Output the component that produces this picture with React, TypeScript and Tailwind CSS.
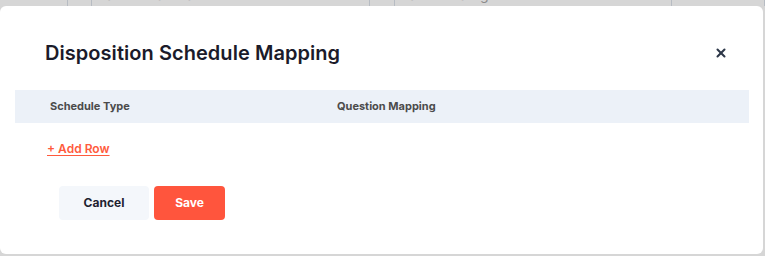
import { X } from 'lucide-react';

const BackgroundRow = () => {
  // just the bottom edge of the table row behind the overlay
  const cells = [
    { w: 'w-[68px]', text: '' },
    { w: 'w-[24px]', text: '' },
    { w: 'w-[278px]', text: 'Search Sub Sub Process' },
    { w: 'w-[25px]', text: '' },
    { w: 'w-[277px]', text: 'Search Stage' },
    { w: 'flex-1', text: '' },
  ];
  return (
    <div className="h-[6px] overflow-hidden">
      <div className="flex h-[28px] -mt-[20px]">
        {cells.map((c, i) => (
          <div
            key={i}
            className={`${c.w} h-full border-r border-[#b7bcc3] pl-[13px] flex items-center text-[14px] text-[#8c8c8c]`}
          >
            {c.text}
          </div>
        ))}
      </div>
    </div>
  );
};

const App = () => {
  return (
    <div
      className="w-[765px] h-[256px] overflow-hidden bg-[#d6d6d6]"
      style={{ fontFamily: 'Inter, "Noto Sans", sans-serif' }}
    >
      <BackgroundRow />

      <div className="w-[763px] h-[248px] bg-white rounded-md pl-[15px] pr-[14px] pt-[33px]">
        {/* Header */}
        <div className="flex items-center justify-between pl-[30px] pr-[21px] h-[28px]">
          <h2 className="text-[20px] font-semibold text-[#1b1b2a] tracking-[0.05px]">
            Disposition Schedule Mapping
          </h2>
          <button className="text-[#2d3748]">
            <X size={14} strokeWidth={3.5} />
          </button>
        </div>

        {/* Table header */}
        <div className="mt-[23px] h-[33px] bg-[#ecf1f8] flex items-center pl-[35px] text-[11px] font-bold text-[#4b4b4b]">
          <div className="w-[287px]">Schedule Type</div>
          <div>Question Mapping</div>
        </div>

        {/* Add row */}
        <div className="mt-[18px] pl-[32px] h-[16px] flex items-center">
          <button className="text-[12px] font-semibold text-[#ff5a3d] underline underline-offset-2">
            + Add Row
          </button>
        </div>

        {/* Footer */}
        <div className="mt-[29px] pl-[44px] flex gap-[5px]">
          <button className="w-[90px] h-[34px] rounded bg-[#f4f7fb] text-[12px] font-bold text-[#1f2230]">
            Cancel
          </button>
          <button className="w-[71px] h-[34px] rounded bg-[#ff553d] text-[12px] font-bold text-white">
            Save
          </button>
        </div>
      </div>
    </div>
  );
};

export default App;
